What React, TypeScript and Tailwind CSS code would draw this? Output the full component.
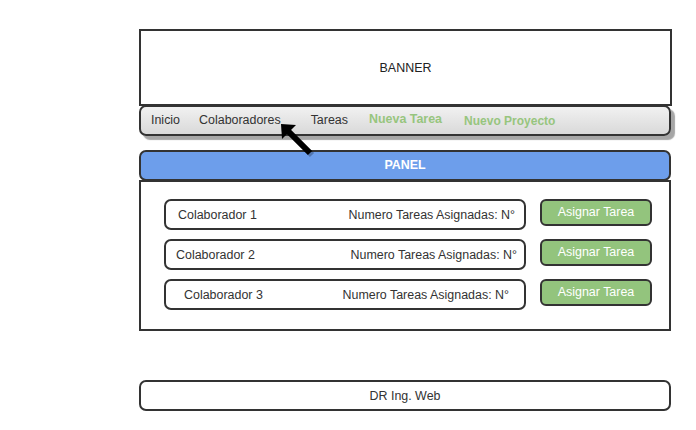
import React from "react";

const rows = [
  { name: "Colaborador 1", nameClass: "pl-[12px]", countClass: "pr-[9px]" },
  { name: "Colaborador 2", nameClass: "pl-[10px]", countClass: "pr-[7px]" },
  { name: "Colaborador 3", nameClass: "pl-[18px]", countClass: "pr-[15px]" },
];

const App: React.FC = () => {
  return (
    <div
      className="relative w-[696px] h-[430px] bg-white text-[12.45px] text-[#222] overflow-hidden"
      style={{ fontFamily: '"Liberation Sans", Arial, sans-serif' }}
    >
      <div className="flex flex-col w-[533px] ml-[139px] pt-[29px]">
        {/* banner */}
        <div className="flex items-center justify-center h-[77px] pt-[2px] border-2 border-[#333] bg-white">
          BANNER
        </div>

        {/* nav */}
        <div
          className="flex items-center h-[31px] -mt-[1px] w-[532px] rounded-[7px] border-2 border-[#333]
          bg-gradient-to-b from-[#f1f1f1] to-[#d9d9d9] shadow-[4px_4px_1px_rgba(0,0,0,0.35)] pl-[10px] text-[#333]"
        >
          <span>Inicio</span>
          <span className="ml-[19px]">Colaboradores</span>
          <span className="ml-[30px]">Tareas</span>
          <span className="ml-[21px] -mt-[3px] font-bold text-[#97c57e]">Nueva Tarea</span>
          <span className="ml-[22px] font-bold text-[12px] text-[#97c57e]">Nuevo Proyecto</span>
        </div>

        {/* panel */}
        <div className="flex items-center justify-center mt-[14px] h-[31px] w-[532px] rounded-[7px] border-2 border-[#333] bg-[#6d9eeb] font-bold text-white">
          PANEL
        </div>
        <div className="flex flex-col gap-[9px] -mt-[1px] h-[151px] w-[532px] border-2 border-[#333] pt-[17px] pl-[23px]">
          {rows.map((r) => (
            <div key={r.name} className="flex items-center">
              <div className="flex items-center justify-between w-[362px] h-[31px] pt-[2px] rounded-[7px] border-2 border-[#333] text-[#333]">
                <span className={r.nameClass}>{r.name}</span>
                <span className={r.countClass}>Numero Tareas Asignadas: N°</span>
              </div>
              <div className="flex items-center justify-center ml-[14px] -mt-[4px] w-[112px] h-[27px] rounded-[6px] border-2 border-[#333] bg-[#93c47d] text-white">
                Asignar Tarea
              </div>
            </div>
          ))}
        </div>

        {/* footer */}
        <div className="flex items-center justify-center mt-[49px] h-[31px] pt-[1px] w-[532px] rounded-[7px] border-2 border-[#333] text-[#333]">
          DR Ing. Web
        </div>
      </div>

      {/* cursor arrow */}
      <svg className="absolute left-[278px] top-[121px]" width="38" height="38" viewBox="0 0 38 38">
        <line x1="10" y1="10" x2="33" y2="33" stroke="rgba(0,0,0,0.25)" strokeWidth="6" transform="translate(1 1)" />
        <line x1="9" y1="9" x2="32" y2="32" stroke="#000" strokeWidth="6" />
        <polygon points="3,3 18,4 4,18" fill="#000" />
      </svg>
    </div>
  );
};

export default App;
